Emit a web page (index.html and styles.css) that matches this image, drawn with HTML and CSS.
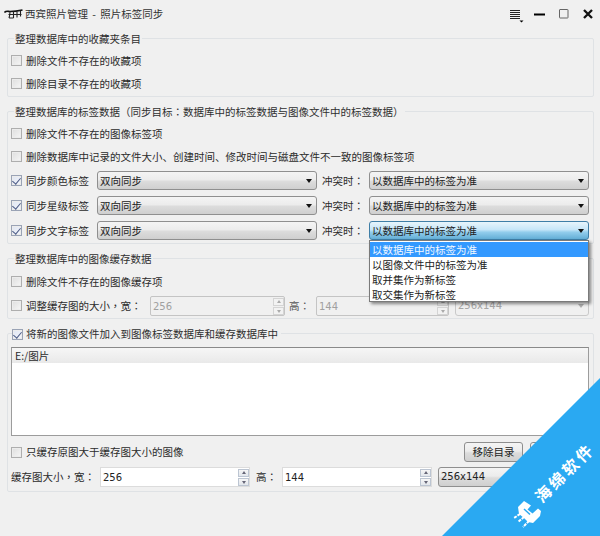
FILE: index.html
```html
<!DOCTYPE html>
<html lang="zh-CN">
<head>
<meta charset="utf-8">
<title>照片标签同步</title>
<link rel="stylesheet" href="styles.css">
</head>
<body>
<div class="app">
  <header class="titlebar">
    <svg class="app-logo" width="19" height="10" viewBox="0 0 19 10"><path class="logo-top" d="M0.500 3.500C2 1.500 4 2.500 6 2.500C10 2.500 14 2 18.500 1"/><path class="logo-legs" d="M6 2.500C6 5 5.500 7.500 5 9M9.500 2.500V9M13 2.500V8.500M16.500 2V7.500M4.500 5.500H17.500M5 9H9.500"/></svg>
    <span class="app-title">西宾照片管理 - 照片标签同步</span>
    <div class="win-controls">
      <span class="win-btn"><svg width="16" height="14" viewBox="0 0 16 14"><path class="i-menu" d="M0 1.500H10M0 3.500H10M0 5.500H10M0 7.500H10M0 9.500H10"/><path d="M9.500 11.500H13.500L11.500 13.500Z"/></svg></span>
      <span class="win-btn"><svg width="12" height="3" viewBox="0 0 12 3"><rect y="0.500" width="11" height="2"/></svg></span>
      <span class="win-btn"><svg width="10" height="10" viewBox="0 0 10 10"><rect class="i-max" x="0.500" y="0.500" width="8.500" height="8.500" rx="0.500"/></svg></span>
      <span class="win-btn"><svg width="10" height="10" viewBox="0 0 10 10"><path class="i-close" d="M1 1L9 9M9 1L1 9"/></svg></span>
    </div>
  </header>

  <section class="group g1">
    <div class="group-title">整理数据库中的收藏夹条目</div>
    <div class="rows">
      <label class="row"><span class="check"></span>删除文件不存在的收藏项</label>
      <label class="row"><span class="check"></span>删除目录不存在的收藏项</label>
    </div>
  </section>

  <section class="group g2">
    <div class="group-title">整理数据库的标签数据<span class="p" lang="zh-Hant">（</span>同步目标<span class="p" lang="zh-Hant">：</span>数据库中的标签数据与图像文件中的标签数据<span class="p" lang="zh-Hant">）</span></div>
    <div class="rows">
      <label class="row"><span class="check"></span>删除文件不存在的图像标签项</label>
      <label class="row"><span class="check"></span>删除数据库中记录的文件大小、创建时间、修改时间与磁盘文件不一致的图像标签项</label>
      <div class="sync-row">
        <label class="sync-label"><span class="check on"></span>同步颜色标签</label>
        <div class="combo">双向同步</div>
        <span class="conflict">冲突时<span class="p" lang="zh-Hant">：</span></span>
        <div class="combo">以数据库中的标签为准</div>
      </div>
      <div class="sync-row">
        <label class="sync-label"><span class="check on"></span>同步星级标签</label>
        <div class="combo">双向同步</div>
        <span class="conflict">冲突时<span class="p" lang="zh-Hant">：</span></span>
        <div class="combo">以数据库中的标签为准</div>
      </div>
      <div class="sync-row">
        <label class="sync-label"><span class="check on"></span>同步文字标签</label>
        <div class="combo">双向同步</div>
        <span class="conflict">冲突时<span class="p" lang="zh-Hant">：</span></span>
        <div class="combo-wrap">
          <div class="combo active">以数据库中的标签为准</div>
          <ul class="popup">
            <li class="selected">以数据库中的标签为准</li>
            <li>以图像文件中的标签为准</li>
            <li>取并集作为新标签</li>
            <li>取交集作为新标签</li>
          </ul>
        </div>
      </div>
    </div>
  </section>

  <section class="group g3">
    <div class="group-title">整理数据库中的图像缓存数据</div>
    <div class="rows rows-g3">
      <label class="row"><span class="check"></span>删除文件不存在的图像缓存项</label>
      <div class="row tall">
        <label class="resize-label"><span class="check"></span>调整缓存图的大小<span class="p" lang="zh-Hant">，</span>宽<span class="p" lang="zh-Hant">：</span></label>
        <div class="spin disabled w135">256<span class="spin-btns"><i class="up"></i><i class="down"></i></span></div>
        <span class="h-label h31">高<span class="p" lang="zh-Hant">：</span></span>
        <div class="spin disabled w133">144<span class="spin-btns"><i class="up"></i><i class="down"></i></span></div>
        <div class="combo disabled w134">256x144</div>
      </div>
    </div>
  </section>

  <section class="group g4">
    <div class="group-title check-title"><span class="check on"></span>将新的图像文件加入到图像标签数据库和缓存数据库中</div>
    <div class="list">
      <div class="list-head">E:/图片</div>
    </div>
    <div class="row-actions">
      <label class="action-label"><span class="check"></span>只缓存原图大于缓存图大小的图像</label>
      <button class="btn" type="button">移除目录</button>
      <button class="btn" type="button">添加目录</button>
    </div>
    <div class="row-size">
      <span class="size-label">缓存图大小<span class="p" lang="zh-Hant">，</span>宽<span class="p" lang="zh-Hant">：</span></span>
      <div class="spin w150">256<span class="spin-btns"><i class="up"></i><i class="down"></i></span></div>
      <span class="h-label h32">高<span class="p" lang="zh-Hant">：</span></span>
      <div class="spin w150">144<span class="spin-btns"><i class="up"></i><i class="down"></i></span></div>
      <div class="combo w151">256x144</div>
    </div>
  </section>

  <aside class="ribbon">
    <span class="ribbon-text">海绵软件</span>
    <svg class="ribbon-logo" width="40" height="40" viewBox="0 0 40 40"><path class="r-body" d="M13 15L19 9L26 13.500L22.500 17.500L27.500 21.500L33 16.500L36 19L35 24L28 31L23 30L19 26L14 22Z"/><path class="r-notch" d="M19 17L25 22.500"/><path class="r-line" d="M15 22L9 26M19 25L13 30M24 29L18 35"/></svg>
  </aside>
</div>
</body>
</html>
```
FILE: styles.css
```css
* { box-sizing: border-box; }
html, body { margin: 0; padding: 0; }
body {
  width: 600px;
  height: 536px;
  overflow: hidden;
  font-family: "Noto Sans CJK SC", "Liberation Sans", sans-serif;
  font-size: 10.5px;
  line-height: 14px;
  color: #2b2b2b;
  background: #f0f0f0;
}
.app {
  position: relative;
  width: 600px;
  height: 536px;
  overflow: hidden;
}
.p { font-family: "Noto Sans CJK TC", sans-serif; }

/* title bar */
.titlebar {
  display: flex;
  align-items: center;
  height: 28px;
  margin-bottom: 10px;
  padding-left: 4px;
}
.app-logo { flex: none; margin-right: 2px; }
.logo-top { fill: none; stroke: #111; stroke-width: 1.600; }
.logo-legs { fill: none; stroke: #222; stroke-width: 1.100; }
.app-title { color: #333; word-spacing: 2px; }
.win-controls { display: flex; margin-left: auto; }
.win-btn {
  display: flex;
  align-items: center;
  justify-content: center;
  width: 24px;
  height: 28px;
}
.win-btn:first-child { padding-top: 3px; padding-left: 3px; }
.i-menu { fill: none; stroke: #222; stroke-width: 1; }
.i-max { fill: none; stroke: #666; stroke-width: 1; }
.i-close { fill: none; stroke: #111; stroke-width: 2.300; }

/* groups */
.group {
  margin: 0 6px 14px 7px;
  padding: 0 4px 0 3px;
  border: 1px solid #dfe2e5;
  border-radius: 2px;
}
.g1 { padding-bottom: 1px; }
.group-title {
  width: fit-content;
  height: 14px;
  margin: -7px 0 0 3px;
  padding: 0 1px;
  background: #f0f0f0;
  color: #2f2f2f;
}
.rows { padding-top: 3px; }
.rows-g3 { padding-top: 4px; }
.row {
  display: flex;
  align-items: center;
  height: 23px;
}
.row.tall { height: 25px; }

.check {
  position: relative;
  flex: none;
  width: 11px;
  height: 11px;
  margin-right: 4px;
  border: 1px solid #aeaeae;
  background: linear-gradient(135deg, #dedede, #f6f6f6);
  box-shadow: inset 0 0 0 1px #ececec;
}
.check.on {
  border-color: #9aa3b5;
  background: linear-gradient(135deg, #dfe5f2, #f4f6fb);
}
.check.on::after {
  content: "";
  position: absolute;
  left: 2px;
  top: 0;
  width: 4px;
  height: 7px;
  border: solid #4b5a86;
  border-width: 0 1.500px 1.500px 0;
  transform: rotate(40deg);
}

/* sync rows */
.sync-row {
  display: grid;
  grid-template-columns: 86px 220px 52px 220px;
  align-items: center;
  height: 25px;
  padding: 3px 0;
}
.sync-label { display: flex; align-items: center; }
.conflict { padding-left: 5px; }
.combo-wrap { position: relative; }

.combo {
  position: relative;
  height: 19px;
  padding: 0 14px 0 2px;
  line-height: 18px;
  border: 1px solid #8f8f8f;
  border-radius: 3px;
  background: linear-gradient(#f4f4f4 0%, #ececec 45%, #dcdcdc 55%, #cfcfcf 100%);
  color: #222;
}
.combo::after {
  content: "";
  position: absolute;
  right: 4px;
  top: 7px;
  border: solid transparent;
  border-width: 4px 3.500px 0;
  border-top-color: #111;
}
.combo.active {
  border-color: #3f7ea6;
  background: linear-gradient(#e8f5fc 0%, #c6e6f8 45%, #92cdec 60%, #63aed6 100%);
}
.combo.disabled {
  height: 20px;
  margin-left: 6px;
  border-color: #c9c9c9;
  background: #f0f0f0;
  color: #a6a6a6;
  font-family: "DejaVu Sans", sans-serif;
  font-size: 10px;
}
.combo.disabled::after { border-top-color: #b0b0b0; }
.w134 { width: 134px; flex: none; }
.w151 {
  flex: none;
  width: 151px;
  height: 20px;
  margin-left: 6px;
  font-family: "DejaVu Sans", sans-serif;
  font-size: 10px;
}

.popup {
  position: absolute;
  left: 0;
  top: 19px;
  z-index: 2;
  width: 220px;
  height: 62px;
  margin: 0;
  padding: 1px 0 0;
  list-style: none;
  background: #fff;
  border: 1px solid #7a7a7a;
  box-shadow: 2px 2px 3px rgba(0, 0, 0, 0.45);
}
.popup li { height: 15px; padding-left: 2px; line-height: 15px; color: #222; }
.popup li.selected { background: #3399ff; color: #f2f8ff; }

/* spin boxes */
.resize-label { display: flex; align-items: center; flex: none; width: 139px; }
.spin {
  position: relative;
  flex: none;
  height: 20px;
  padding-left: 2px;
  line-height: 19px;
  border: 1px solid #dcdcdc;
  background: #fff;
  font-family: "DejaVu Sans", sans-serif;
  font-size: 10px;
  color: #222;
}
.spin.disabled {
  border-color: #c4c4c4;
  border-radius: 2px;
  background: #f0f0f0;
  color: #a0a0a0;
}
.w135 { width: 135px; }
.w133 { width: 133px; }
.w150 { width: 150px; }
.spin-btns {
  position: absolute;
  right: 0;
  top: 1px;
  display: flex;
  flex-direction: column;
  gap: 1px;
  width: 11px;
}
.spin-btns i {
  position: relative;
  display: block;
  height: 8px;
  border: 1px solid #bcc5d2;
  background: linear-gradient(#f6f6f6, #e2e6ec);
}
.spin.disabled .spin-btns i { border-color: #d4d4d4; background: #f2f2f2; }
.spin-btns i::after {
  content: "";
  position: absolute;
  left: 2.500px;
  border: solid transparent;
  border-width: 0 2px;
}
.spin-btns .up::after { top: 1px; border-bottom: 3px solid #667; }
.spin-btns .down::after { top: 2px; border-top: 3px solid #667; }
.spin.disabled .spin-btns i::after { border-bottom-color: #aaa; border-top-color: #aaa; }
.h-label { flex: none; }
.h31 { width: 31px; padding-left: 4px; color: #555; }
.h32 { width: 32px; padding-left: 6px; }

/* group 4 */
.check-title { margin-left: 1px; padding: 0 3px 0 0; display: flex; align-items: center; }
.check-title .check { margin-right: 3px; }
.list {
  height: 89px;
  margin-top: 6px;
  border: 1px solid #9c9c9c;
  border-top-color: #8a8a8a;
  background: #fff;
}
.list-head {
  height: 15px;
  padding-left: 3px;
  background: linear-gradient(#f6f6f6, #e9e9e9);
  line-height: 15px;
}
.row-actions {
  display: flex;
  align-items: center;
  height: 20px;
  margin-top: 6px;
}
.action-label { display: flex; align-items: center; margin-right: auto; }
.btn {
  width: 59px;
  height: 20px;
  margin-left: 7px;
  padding: 0;
  font: inherit;
  color: #222;
  border: 1px solid #8e8e8e;
  border-radius: 3px;
  background: linear-gradient(#f4f4f4 0%, #ececec 45%, #dcdcdc 55%, #d0d0d0 100%);
}
.btn:first-of-type { margin-left: 0; }
.row-size {
  display: flex;
  align-items: center;
  height: 20px;
  margin: 5px 0 4px;
}
.size-label { flex: none; width: 89px; }

/* corner ribbon */
.ribbon {
  position: absolute;
  left: 442px;
  top: 378px;
  z-index: 3;
  width: 158px;
  height: 158px;
  background: #2aa9f2;
  clip-path: polygon(100% 0, 100% 100%, 0 100%);
}
.ribbon-text {
  position: absolute;
  left: 122px;
  top: 94px;
  transform: translate(-50%, -50%) rotate(-45deg);
  white-space: nowrap;
  font-size: 16px;
  line-height: 20px;
  font-weight: 700;
  letter-spacing: 3px;
  color: #fff;
}
.ribbon-logo {
  position: absolute;
  left: 63px;
  top: 114px;
}
.r-body { fill: #fff; }
.r-notch { fill: none; stroke: #2aa9f2; stroke-width: 1.500; }
.r-line { fill: none; stroke: #fff; stroke-width: 2; stroke-dasharray: 3 1; }
```
